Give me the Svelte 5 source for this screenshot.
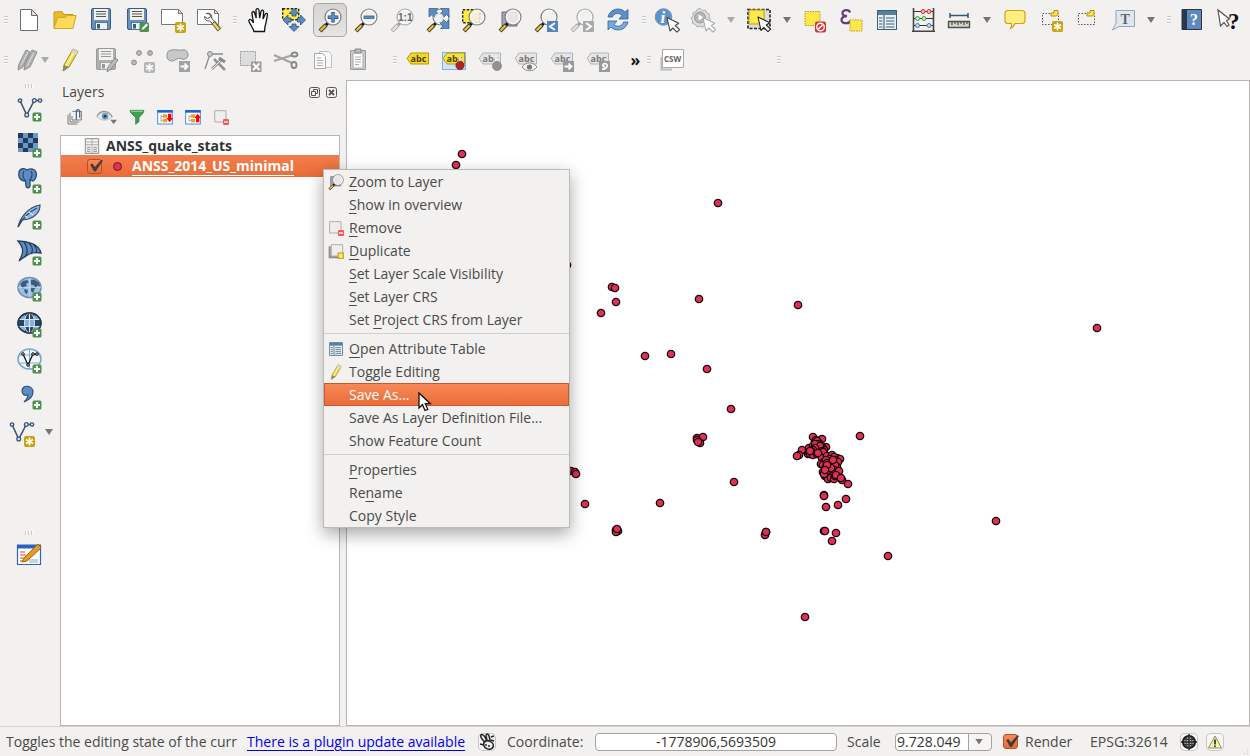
<script>
    const plus = `<rect x="15.500" y="16.500" width="9" height="9" rx="1.500" fill="#4f8f50"/><path d="M20 18v6M17 21h6" stroke="#fff" stroke-width="2"/>`;
    const star = (x, y, color = '#c9a30c') => `<g transform="translate(${x} ${y})"><rect width="11" height="11" rx="2" fill="${color}"/><path d="M5.500 1.500v8M2 3.500l7 4M9 3.500l-7 4" stroke="#fff" stroke-width="1.700"/></g>`;
    const arrow = (x, y, fill = '#fff', stroke = '#222') => `<path transform="translate(${x} ${y})" d="M0 0l3 13.500 2.800-3 4.200 4.200 2.500-2.500-4.200-4.200 3.400-2.200z" fill="${fill}" stroke="${stroke}" stroke-width="1.100" stroke-linejoin="round"/>`;

    function lens(inside, { back = '', gray = false, over = '' } = {}) {
        return `${back}<path d="M2 23l6-6" stroke="${gray ? '#aaa' : '#333'}" stroke-width="4"/>
            <path d="M2.500 22.500l5-5" stroke="${gray ? '#e4e4e4' : '#f4c022'}" stroke-width="2.400"/>
            <path d="M8 17l2-2" stroke="${gray ? '#999' : '#111'}" stroke-width="3"/>
            <circle cx="15" cy="9" r="8" fill="#f1f1ee" fill-opacity=".85" stroke="${gray ? '#aaa' : '#808080'}" stroke-width="1.200"/>
            <circle cx="15" cy="9" r="6.500" fill="none" stroke="#fff" stroke-opacity=".8"/>${inside}${over}`;
    }

    function floppy(a, b, c) {
        return `<rect x="2.500" y=".5" width="19" height="21" rx="1.500" fill="${a}" stroke="${b}"/>
            <rect x="5" y="1" width="14" height="11" fill="#f1f1ee"/><path d="M7 3.500h10M7 6h10M7 8.500h10" stroke="${c}" stroke-width="1.200"/>
            <rect x="6.500" y="14.500" width="12" height="7" fill="#f0f0f0" stroke="${b}" stroke-width=".7"/><rect x="8" y="16" width="3" height="4.500" fill="${b}"/>`;
    }

    function tag(fill, stroke, text, extra = '') {
        return `<path d="M1 10.500l4-5.500h17.500v11H5z" fill="${fill}" stroke="${stroke}"/>
            <text x="4.500" y="13.500" font-family="Open Sans, sans-serif" font-size="9" font-weight="700" fill="${text}">abc</text>${extra}`;
    }

    function nodes(color, extra) {
        return `<path d="M3 4.500L9.700 19 17.300 4.500H23" fill="none" stroke="${color}" stroke-width="1.600"/>
            <g fill="#dce9f5" stroke="${color}" stroke-width="1.300"><circle cx="3" cy="4.500" r="1.700"/><circle cx="9.700" cy="19" r="1.900"/><circle cx="17.300" cy="4.500" r="1.900"/><circle cx="23" cy="4.500" r="1.700"/></g>${extra}`;
    }

    const pencil = (fill, stroke) => `<path d="M5 23l1-6L15 1l5 2.500L11 19z" fill="${fill}" stroke="${stroke}"/><path d="M8 18L17 2.500" stroke="#fff" stroke-opacity=".6" stroke-width="1.500"/><path d="M15 1l5 2.500-2 3.500-5-2.500z" fill="#d9d6cf"/><path d="M5 23l1-6 5 2z" fill="#8b8878"/>`;

    const tablePic = (head, line, bg) => `<rect x="2.500" y="2.500" width="19" height="19" fill="${bg}" stroke="${line}"/><path d="M3 5h18" stroke="${head}" stroke-width="4"/><path d="M9 7v14M4 10h3.500M4 13h3.500M4 16h3.500M4 19h3.500M11 10h8.500M11 13h8.500M11 16h8.500M11 19h8.500" stroke="${line}" stroke-width="1.100"/>`;

    const legend = (d) => `<rect x="1" y="2.500" width="22" height="20" fill="#fff" stroke="#4d8ce8" stroke-width="1.500"/><path d="M.5 3.500h23" stroke="#1f62d6" stroke-width="4"/><path d="M6 9v10M6 11h3M6 17h3" stroke="#888"/><path d="M9 8h6v5H9zM9 15h6v5H9z" fill="#f0a020"/><path d="${d}" fill="red"/>`;

    const layerBox = `<path d="M2.500 2.500h17v17h-17z" fill="#efeeec" stroke="#a5a5a5" stroke-width="1.300"/>`;

    const icons = {
        new: `<path d="M3.500 1.500h11l6 6v15h-17z" fill="#fff" stroke="#6d6d6d"/><path d="M14.500 1.500v6h6z" fill="#ddd" stroke="#6d6d6d"/>`,
        open: `<path d="M1 20V4l8-.5 2 3h9v4" fill="#e9b92c" stroke="#c79a1c"/><path d="M1 20.500L4.500 9.500h8l2-2H23l-3 13z" fill="#ffd95c" stroke="#d3a626"/>`,
        save: floppy('#6491c4', '#3d5b80', '#555'),
        saveAs: floppy('#6491c4', '#3d5b80', '#555') + `<rect x="14.500" y="14.500" width="9.500" height="9.500" rx="1.500" fill="#4f8f50"/><path d="M16.500 22l1-2.500 4-4 1.500 1.500-4 4z" fill="#fff"/>`,
        composer: `<path d="M.5 1.500h17l4 4v11H.5z" fill="#fff" stroke="#777"/><path d="M17.500 1.500v4h4z" fill="#ddd" stroke="#777"/>` + star(14, 14),
        manager: `<path d="M.5 1.500h17l4 4v11H.5z" fill="#fff" stroke="#777"/><path d="M17.500 1.500v4h4z" fill="#ddd" stroke="#777"/><path d="M16 14l6.500 8" stroke="#6b5820" stroke-width="4.400"/><path d="M16.500 15l5.500 6.500" stroke="#f3d568" stroke-width="2.500"/><path d="M9 5.500l4 .5.500 3-3 1.500-3-2c0 3 2 5 5 4.500l3 2.500 2-2-3-3.500c1-3-1-5.500-5.500-4.500z" fill="#f0f0f0" stroke="#555"/>`,
        hand: `<path d="M8 23.500c-1-4-4-7-5-10-.6-2 1.300-3 3-.8l1.500 2.200L6 5.500c-.4-2.300 2-2.800 2.700-.5l1.500 5L10 2.500C10 0 12.700 0 13 2.500l.6 7.500L15 3.500c.4-2.200 2.800-1.700 2.600.4L17 11l2-4.500c.8-1.800 2.800-1.300 2.400.7-.6 3-1.400 8-2.400 11.300l-.5 5z" fill="#fff" stroke="#111" stroke-width="1.300"/>`,
        panSel: `<rect x=".7" y=".7" width="16" height="11" fill="#ffec3d" stroke="#222" stroke-width="1.400" stroke-dasharray="2.500 1.500"/><path d="M12 .5l5 5h-3V8h-4V5.500H7zM12 23.500l5-5h-3V16h-4v2.500H7zM1 12l5-5v3h3v4H6v3zM23.500 12l-5-5v3h-3v4h3v3z" fill="#5b8cc4" stroke="#2d4f7c" stroke-width=".8"/>`,
        zoomIn: lens(`<path d="M15 4v10.500M9.700 9.200h10.600" stroke="#31587e" stroke-width="3.400"/><path d="M15 4.800v9M10.500 9.200h9" stroke="#5f93cb" stroke-width="1.800"/>`),
        zoomOut: lens(`<path d="M9.700 9.200h10.600" stroke="#31587e" stroke-width="3.200"/><path d="M10.500 9.200h9" stroke="#5f93cb" stroke-width="1.700"/>`),
        zoomOne: lens(`<text x="8" y="12.500" font-family="Liberation Sans, sans-serif" font-weight="700" font-size="10" fill="#666">1:1</text>`, { gray: true }),
        zoomFull: lens('', { over: `<path d="M3 .5h9L9.500 3l3.500 3.500L9.500 10 6 6.500 3 9zM23 .5V9l-2.500-2.500L17 10l-3.500-3.500L17 3 14.500.5zM23 20.500h-8.500L17 18l-3.500-3.500L17 11l3.500 3.500L23 12z" fill="#5b8cc4" stroke="#31587e" stroke-width=".7"/><circle cx="13" cy="10" r="4.500" fill="#f4f4f2" fill-opacity=".92"/>` }),
        zoomSel: lens('', { back: `<rect x=".7" y="1.700" width="17" height="13" fill="#ffec3d" stroke="#222" stroke-width="1.400" stroke-dasharray="2.500 1.500"/>` }),
        zoomLayer: lens('', { back: `<path d="M4 4h15v14H4z" fill="#aea0b4" stroke="#746a7c"/>` }),
        zoomLast: lens('', { over: `<rect x="13" y="13" width="11" height="11" fill="#5285bd"/><path d="M21 15l-5 3.500 5 3.500" stroke="#fff" stroke-width="2" fill="none"/>` }),
        zoomNext: lens('', { gray: true, over: `<rect x="13" y="13" width="11" height="11" fill="#aaa"/><path d="M16 15l5 3.500-5 3.500" stroke="#fff" stroke-width="2" fill="none"/>` }),
        refresh: `<path d="M2 9C4 0 15-1 19 4l3-2.500V11h-9l3-3.500C13 4.500 8 5 6.500 9z" fill="#5b8fce" stroke="#2f62a0" stroke-width=".8"/><path d="M22 14c-2 9-13 10-17 5l-3 3V13h9l-3 3.500c3 3 8 2 9.500-2.500z" fill="#79a9e0" stroke="#2f62a0" stroke-width=".8"/>`,
        info: `<circle cx="8.500" cy="9" r="8.300" fill="#5f92c9" stroke="#6f97c2"/><text x="5.500" y="14.500" font-family="Liberation Serif, serif" font-style="italic" font-weight="700" font-size="17" fill="#fff">i</text>` + arrow(12, 9.5, '#fff', '#444'),
        gear: `<path d="M9 .5l2.500 2 3-.5 1 3 3 1-.5 3 1.500 2.500-2.500 2-.5 3-3 .5-2 2.500-2.500-1.500-3 1-1.500-2.500-3-1 .2-3L0 10l2-2.500V4.500l3-.7L6.500 1z" fill="#dedede" stroke="#adadad"/><circle cx="9" cy="9.500" r="5.500" fill="#b5b5b5" stroke="#999"/><path d="M7.500 6.500l5 3-5 3z" fill="#fff"/>` + arrow(12, 9.5, '#fff', '#aaa'),
        select: `<rect x="1" y="1.500" width="22" height="19" fill="#ddd" stroke="#222" stroke-width="1.600" stroke-dasharray="3 1.500"/><path d="M2 2h15v14H2z" fill="#ffe94a" stroke="#b89b20"/>` + arrow(11, 9),
        deselect: `<path d="M2 3.500h15v14H2z" fill="#ffe94a" stroke="#b89b20" stroke-dasharray="1.500 1"/><rect x="12" y="13.500" width="11" height="11" rx="2" fill="#d93030"/><circle cx="17.500" cy="19" r="3.800" fill="none" stroke="#fff" stroke-width="1.400"/><path d="M15 21.500l5-5" stroke="#fff" stroke-width="1.400"/>`,
        expr: `<path d="M11 4.500C10 1 3 1.500 3.500 5.500 3.700 7.500 6 8 8 8c-3 0-5.500 1-5.500 4 0 4.500 9 4 9.500 0" fill="none" stroke="#60407c" stroke-width="2.300"/><path d="M11 12h12v11H11z" fill="#ffe94a" stroke="#b89b20" stroke-dasharray="1.500 1"/>`,
        table: tablePic('#5580a0', '#3c5c70', '#e7f1f8'),
        abacus: `<path d="M2.500 0v23M22.500 0v23M1 23.300h23" stroke="#444" stroke-width="1.600"/><path d="M3 3.500h19M3 10.500h19M3 17.500h19" stroke="#333" stroke-width="1.200"/><g fill="#f6b8b8" stroke="#d12c2c"><circle cx="12" cy="3.500" r="2"/><circle cx="18" cy="3.500" r="2"/></g><g fill="#c4ecc4" stroke="#3d9a4e"><circle cx="6.500" cy="10.500" r="2"/><circle cx="13" cy="10.500" r="2"/></g><g fill="#bfdcf3" stroke="#3f78aa"><circle cx="6.500" cy="17.500" r="2"/><circle cx="18" cy="17.500" r="2"/></g>`,
        ruler: `<path d="M3 7.500h18M3 5v5M21 5v5" stroke="#2e5b74" stroke-width="1.500"/><path d="M1.500 13.500h21v6h-21z" fill="#d2d5c9" stroke="#4d5348" stroke-width="1.400"/><path d="M5 14v3M8 14v2M11 14v3M14 14v2M17 14v3M20 14v2" stroke="#333"/>`,
        tip: `<path d="M5 2.500h14c2 0 3 1.500 3 3v7c0 2-1 3-3 3h-7c-1 3-2 4-4.500 5 1-2 1.500-3 1-5H5c-2 0-3-1-3-3v-7c0-2 1-3 3-3z" fill="#ffee80" stroke="#caa31c" stroke-width="1.200"/>`,
        bookmarkNew: `<path d="M3.500 5.500h16v11h-16z" fill="none" stroke="#555" stroke-dasharray="1.500 1.500"/><path d="M12 5h3V2.500h4v3L17.500 8H12z" fill="#ffe94a" stroke="#b48e10"/>` + star(13, 13),
        bookmark: `<path d="M3.500 5.500h16v11h-16z" fill="none" stroke="#555" stroke-dasharray="1.500 1.500"/><path d="M12 5h3V2.500h4v3L17.500 8H12z" fill="#ffe94a" stroke="#b48e10"/>`,
        annotate: `<path d="M5 2.500h18.500v16H8L1.500 22 5 15z" fill="#dfe8f0" stroke="#98a4ad"/><text x="9.500" y="15.500" font-family="Liberation Serif, serif" font-weight="700" font-size="14" fill="#666">T</text>`,
        help: `<path d="M2 1.500h19.500v20H2z" fill="#5c8abf" stroke="#333"/><path d="M2 1.500h5v20H2z" fill="#28394e"/><text x="10" y="17" font-family="Liberation Serif, serif" font-weight="700" font-size="16" fill="#fff">?</text>`,
        whats: `<path d="M2 2l2.500 16 3.500-3.500 3 4 2-1.500-2.500-4.500 3-1.500z" fill="#fff" stroke="#555" stroke-width="1.200"/><text x="12" y="21" font-family="Liberation Serif, serif" font-weight="700" font-size="23" fill="#111">?</text>`,
        edits: `<path d="M1 22l1-6L9 2l4 2L6 19zM7 22l1-6L15 2l5 2L13 19z" fill="#b2b2b2" stroke="#8e8e8e"/><path d="M4 17l7-13M10 18l7-13" stroke="#ddd"/>`,
        pencil: pencil('#f3df45', '#9a8a23'),
        saveEdits: floppy('#b0b0b0', '#999', '#999') + `<path d="M13 24l1-5 7-9 3 2-7 9z" fill="#bbb" stroke="#888"/>`,
        addPoint: `<g fill="#bbb" stroke="#8a8a8a"><circle cx="9" cy="5" r="2.400"/><circle cx="20" cy="5" r="2.400"/><circle cx="4" cy="14.500" r="2.400"/></g>` + star(14, 14, '#b4b4b4'),
        move: `<path d="M6 2c4-1 6 1 10 0s6 2 6 5-3 5-6 4-4-1-7 1-8 1-8-4 2-5.500 5-6z" fill="#c8c8c8" stroke="#909090"/><rect x="13" y="13" width="11" height="11" fill="#a2a2a2"/><path d="M14.500 18.500h7M18.500 15.500l3 3-3 3" stroke="#fff" stroke-width="1.800" fill="none"/>`,
        nodeTool: `<path d="M3 21L8 6h13" fill="none" stroke="#8a8a8a" stroke-width="1.300"/><circle cx="8" cy="6" r="2.500" fill="#ccc" stroke="#888"/><path d="M10 21l9-9M12 11l11 11" stroke="#929292" stroke-width="2.500"/><path d="M10 21l9-9" stroke="#eee"/><path d="M17 10l6 4" stroke="#888" stroke-width="3"/>`,
        deleteSel: `<path d="M2.500 3.500h15v14h-15z" fill="#ddd" stroke="#999" stroke-dasharray="2 1"/><rect x="13" y="13.500" width="10.500" height="10.500" fill="#9d9d9d"/><path d="M15 15.500l6.500 6.500M21.500 15.500L15 22" stroke="#fff" stroke-width="2"/>`,
        cut: `<path d="M0 7l18 8M0 13l19-6" stroke="#a3a3a3" stroke-width="2.200"/><g fill="none" stroke="#888" stroke-width="1.800"><ellipse cx="20.500" cy="6.500" rx="3" ry="2"/><ellipse cx="20" cy="17" rx="2.500" ry="3"/></g>`,
        copy: `<path d="M9.500 3.500h9l3 3v13h-12z" fill="#f7f7f7" stroke="#c0c0c0"/><path d="M4.500 5.500h8l3 3v12h-11z" fill="#fff" stroke="#aaa"/><path d="M7 10h4M7 12.500h6M7 15h6M7 17.500h6" stroke="#aaa"/>`,
        paste: `<path d="M4.500 2.500h15v19h-15z" fill="#ccc" stroke="#999"/><path d="M7 5h10v15H7z" fill="#fff" stroke="#aaa"/><path d="M9 1h6v4H9z" fill="#bbb" stroke="#888"/><path d="M9 9h6M9 11.500h6M9 14h6M9 16.500h4" stroke="#aaa"/>`,
        label: tag('#f5d827', '#b79608', '#4c3f00'),
        labelPin: `<rect x=".5" y="4.500" width="23" height="17" fill="#cfe4f8" stroke="#7fb2e3"/>` + tag('#f5e33a', '#b79608', '#4c3f00', `<path d="M18 9v6" stroke="#ddd" stroke-width="3"/><circle cx="18" cy="17.500" r="4.200" fill="#b22222" stroke="#801717" stroke-width=".6"/>`),
        labelMove: tag('#e6e6e6', '#b3b3b3', '#777', `<path d="M18 8v6" stroke="#eee" stroke-width="3"/><circle cx="19" cy="18" r="4.500" fill="#929292" stroke="#777" stroke-width=".6"/>`),
        labelEye: tag('#e6e6e6', '#b3b3b3', '#777', `<path d="M8 19c4-5.500 11-5.500 15 0-4 5-11 5-15 0z" fill="#f8f8f8" stroke="#888"/><circle cx="15.500" cy="19" r="2.600" fill="#777"/>`),
        labelArrow: tag('#e6e6e6', '#b3b3b3', '#777', `<rect x="13" y="13" width="11" height="11" fill="#999"/><path d="M14.500 18.500h7M18.500 15.500l3 3-3 3" stroke="#fff" stroke-width="1.800" fill="none"/>`),
        labelTurn: tag('#e6e6e6', '#b3b3b3', '#777', `<rect x="13" y="13" width="11" height="11" fill="#999"/><path d="M16 21c5 1 7-5 3-5.500-3 0-2.500 4 0 3" stroke="#fff" stroke-width="1.700" fill="none"/>`),
        csw: `<path d="M1.500 9v12.500H12" fill="none" stroke="#bbb" stroke-width="2"/><path d="M2.500 1.500h21v18h-21z" fill="#fff" stroke="#aaa"/><text x="4" y="14" font-family="Open Sans, sans-serif" font-size="8" font-weight="700" fill="#666">CSW</text>`,
        vector: nodes('#3a5673', plus),
        raster: `<path d="M1 1h20v19H1z" fill="#6b98cb"/><path d="M1 1h5v5H1zM11 1h5v5h-5zM6 6h5v5H6zM16 6h5v5h-5zM1 11h5v5H1zM11 11h5v5h-5zM6 16h5v4H6z" fill="#243a57"/>` + plus,
        postgis: `<path d="M2 4c1-4 6-4 8-2 4-2 8-1 9 2 1 4 0 7-3 9l-3-1v6c-1 3-4 2-4 0l-.5-5C3 13 1 9 2 4z" fill="#5c8dc2" stroke="#2a4a70" stroke-width="1.300"/><path d="M7 3c-2 3-1 7 1 9M14 3c2 3 1 6-1 9" fill="none" stroke="#2a4a70" stroke-width="1.200"/>` + plus,
        feather: `<path d="M1 23C3 14 11 3 23 1c0 8-6 14-18 15z" fill="#8fb8e2" stroke="#304a6b" stroke-width="1.200"/><path d="M1 23C6 13 12 8 20 4" fill="none" stroke="#304a6b" stroke-width="1.300"/><path d="M8 12l3 2M12 8l4 3" stroke="#fff"/>` + plus,
        spatial: `<path d="M1 1c9 0 21 3 23 12-7-1-11-1-22 8 5-8 5-13-1-20z" fill="#5c8dc2" stroke="#25405f" stroke-width="1.300"/><path d="M7 2c4 5 4 11 1 15M12 3c4 4 4 8 2 11M17 5c3 3 3 6 2 8" fill="none" stroke="#25405f" stroke-width="1.300"/>` + plus,
        wms: `<ellipse cx="12.500" cy="11.500" rx="11.500" ry="10" fill="#9cc1e5" stroke="#7290b2" stroke-width="1.500"/><path d="M3 8l3-3 4-1 2 2-3 2 1 2-3 1-1 2zM14 4l3-.5 5 3 1 4-3-1-1 3-2-3-3-1zM7 13l4 1-1 4-2-1zM14 11l4 1-2 5-2-2z" fill="#3d5b7c"/><path d="M1 11.500h23M12.500 2v19" stroke="#c5dcf2" stroke-width=".7"/>` + plus,
        wcs: `<ellipse cx="12.500" cy="11" rx="11.500" ry="10" fill="#83afde" stroke="#26394f" stroke-width="1.400"/><path d="M2 8h6v7H2zM17 8h6v7h-6zM8 2h9v5H8zM8 15h9v5H8z" fill="#294461"/><path d="M1 7.500h23M1 14.500h23M12.500 1v20" stroke="#d5e5f4" stroke-width="1.200"/><ellipse cx="12.500" cy="11" rx="5" ry="10" fill="none" stroke="#d5e5f4"/><ellipse cx="12.500" cy="11" rx="11.500" ry="10" fill="none" stroke="#26394f" stroke-width="1.400"/>` + plus,
        wfs: `<ellipse cx="12.500" cy="11" rx="11.500" ry="10" fill="#f4f8fb" stroke="#7ba6d3" stroke-width="1.500"/><path d="M2 7h21M2 15h21M12.500 1v20" stroke="#7ba6d3"/><path d="M6 6l5 11 5-11h4" stroke="#111" stroke-width="1.300" fill="none"/><g fill="#ddd" stroke="#111"><circle cx="6" cy="6" r="1.300"/><circle cx="11" cy="17" r="1.300"/><circle cx="16" cy="6" r="1.300"/><circle cx="20" cy="6" r="1.300"/></g>` + plus,
        comma: `<path d="M5 7c0-7 11-6 11 1 0 5-4 8-9 10 3-3 4-5 4-7-4 1-6-1-6-4z" fill="#5c8dc2" stroke="#2a4a70" stroke-width="1.100"/>` + plus,
        newVector: nodes('#3a5673', star(15, 16)),
        form: `<path d="M.5 2.500h23v19H.5z" fill="#fff" stroke="#2e67b8" stroke-width="1.200"/><path d="M0 3.500h24" stroke="#2b63c4" stroke-width="4"/><path d="M3 9h5M3 12h6M3 15h4M3 18h6" stroke="#e34040"/><path d="M12 17h9M12 19h9" stroke="#8aa6cc"/><path d="M7 15l-2 4 5-1L24 5l-3-4z" fill="#e79a23" stroke="#a4660d"/>`,
        addGroup: `<path d="M1.500 8.500v14h14M4.500 5.500v14h14M8 3.500h13.500v13h-14v-6" fill="none" stroke="#666" stroke-width="1.300"/><path d="M14 16V4c0-4 5-4 5 0v9" fill="none" stroke="#3f6182" stroke-width="1.800"/>`,
        eye: `<path d="M0 11c5-8 17-8 23 1-7 6-17 7-23-1z" fill="#eee" stroke="#aaa"/><path d="M0 11c5-10 17-10 23 1" stroke="#999" stroke-width="2" fill="none"/><circle cx="12" cy="11" r="5" fill="#6b9ac9"/><circle cx="12" cy="11" r="2" fill="#234"/><path d="M20 16h10l-5 7z" fill="#777"/>`,
        filter: `<path d="M2 2h20v3l-7 8v6l-5 4V13L2 5z" fill="#3da04f" stroke="#21733a"/><path d="M3 3.500h18" stroke="#83cf8b" stroke-width="2"/>`,
        expand: legend('M16.500 7h5v6.500h2.500L19 20l-5-6.500h2.500z'),
        collapse: legend('M16.500 20h5v-6.500h2.500L19 7l-5 6.500h2.500z'),
        remove: layerBox + `<rect x="15" y="15" width="9" height="9" rx="2" fill="#f05858"/><path d="M16.500 19.500h6" stroke="#fff" stroke-width="2"/>`,
        duplicate: `<path d="M2.500 5v16.500h15" fill="none" stroke="#8d8b88" stroke-width="3"/><path d="M5 2.500h17v17H5z" fill="#efeeec" stroke="#a5a5a5" stroke-width="1.300"/><rect x="15" y="15" width="8" height="8" fill="#f8e867" stroke="#b79a10" stroke-width="1.500"/>`,
        grayTable: `<path d="M2 1h20v22H2z" fill="#f4f4f2" stroke="#808080" stroke-width="1.400"/><path d="M2 6h20M2 10h20M12 1v22" stroke="#a5a5a5" stroke-width="1.300"/><path d="M4.500 14h5M4.500 17h5M4.500 20h5M14 14h5.500M14 17h5.500M14 20h5.500" stroke="#888" stroke-width="1.400"/>`,
        undock: `<rect x=".5" y=".5" width="10" height="10" rx="2" fill="none" stroke="#555"/><path d="M4.500 4V2.500h4v4H7M2.500 4.500h4v4h-4z" fill="none" stroke="#555"/>`,
        close: `<rect x=".5" y=".5" width="10" height="10" rx="2" fill="none" stroke="#555"/><path d="M3 3l5 5M8 3L3 8" stroke="#555" stroke-width="1.800"/>`,
        mouse: `<ellipse cx="5.500" cy="5" rx="1.800" ry="4" transform="rotate(-35 5.500 5)" fill="#eee" stroke="#222" stroke-width="1.500"/><ellipse cx="10" cy="5" rx="1.600" ry="4" transform="rotate(-15 10 5)" fill="#ddd" stroke="#222" stroke-width="1.500"/><ellipse cx="10.500" cy="12" rx="5" ry="4" transform="rotate(25 10.500 12)" fill="#eee" stroke="#222" stroke-width="1.600"/><path d="M8 11v2M11 12v2M2 11l4 1M13 4l3-1M13 7l3 1" stroke="#222" stroke-width="1.400"/>`,
        crs: `<circle cx="9" cy="9" r="6" fill="#b8b8b8" stroke="#1c1c1c" stroke-width="2.200"/><path d="M9 1v16M1 9h16" stroke="#222" stroke-width="1.400"/><ellipse cx="9" cy="9" rx="3" ry="6" fill="none" stroke="#333"/><path d="M4 6.500h10M4 11.500h10" stroke="#333"/>`,
        warning: `<path d="M9 3l6.500 12h-13z" fill="#f5f3a5" stroke="#8a8a66" stroke-linejoin="round"/><path d="M9 6.500v5M9 12.500V14" stroke="#222" stroke-width="1.600"/>`
    };

    // '|' puts a menu arrow after a button ('-' a disabled one), '+' marks the pressed one
    const topBar = [
        ['new', 'open', 'save', 'saveAs', 'composer', 'manager'],
        ['hand', 'panSel', '+zoomIn', 'zoomOut', 'zoomOne', 'zoomFull', 'zoomSel', 'zoomLayer', 'zoomLast', 'zoomNext', 'refresh'],
        ['info', 'gear', '-', 'select', '|', 'deselect', 'expr', 'table', 'abacus', 'ruler', '|', 'tip', 'bookmarkNew', 'bookmark', 'annotate', '|'],
        ['help', 'whats']
    ];
    const editBar = ['pencil', 'saveEdits', 'addPoint', 'move', 'nodeTool', 'deleteSel', 'cut', 'copy', 'paste'];
    const labelBar = ['label', 'labelPin', 'labelMove', 'labelEye', 'labelArrow', 'labelTurn'];
    const sideBar = ['vector', 'raster', 'postgis', 'feather', 'spatial', 'wms', 'wcs', 'wfs', 'comma'];
    const layerBar = ['filter', 'expand', 'collapse', 'remove'];

    const menu = [
        [
            ['_Zoom to Layer', 'zoomLayer'],
            ['_Show in overview'],
            ['_Remove', 'remove'],
            ['_Duplicate', 'duplicate'],
            ['_Set Layer Scale Visibility'],
            ['_Set Layer CRS'],
            ['Set _Project CRS from Layer']
        ],
        [
            ['_Open Attribute Table', 'table'],
            ['Toggle Editing', 'pencil'],
            ['Save As...'],
            ['Save As Layer Definition File...'],
            ['Show Feature Count']
        ],
        [['_Properties'], ['Re_name'], ['Copy Style']]
    ];
    let active = $state('Save As...');
    let render = $state(true);
    let layerOn = $state(true);

    const quakes = [
        [115, 73], [109, 84], [371, 122], [220, 184], [265, 206], [268, 207], [269, 221], [254, 232],
        [352, 218], [451, 224], [750, 247], [298, 275], [324, 273], [360, 288], [384, 328], [513, 355],
        [387, 401], [313, 422], [238, 423], [224, 390], [228, 391], [229, 393], [269, 449], [271, 450], [269, 451], [270, 448],
        [419, 451], [418, 454], [419, 451], [541, 475], [649, 440], [458, 536],
        [350, 357], [356, 356], [350, 359], [353, 362], [351, 361],
        [477, 414], [477, 415], [499, 418], [491, 424], [479, 426], [477, 450], [478, 450], [489, 452], [485, 460],
        [466, 356], [475, 358], [468, 361], [472, 362], [479, 366], [455, 369], [452, 374], [450, 375],
        [469, 359], [470, 360], [471, 363], [469, 364], [476, 367], [477, 369],
        [462, 367], [466, 365], [468, 363], [473, 365], [461, 373], [462, 371], [463, 373], [466, 374], [470, 373], [475, 370], [468, 367], [466, 369], [472, 372], [476, 371], [464, 370],
        [475, 377], [480, 375], [485, 374], [490, 377], [493, 378], [487, 376], [488, 379], [483, 378], [477, 381], [474, 383], [491, 381], [479, 379],
        [476, 384], [480, 384], [485, 383], [490, 386], [488, 384], [478, 388], [483, 390], [487, 389], [492, 390], [476, 391], [478, 395], [480, 396], [482, 394],
        [485, 395], [481, 398], [484, 397], [487, 398], [488, 395], [477, 393], [489, 394], [484, 387], [480, 382],
        [463, 370], [471, 372], [486, 379], [480, 384], [478, 389], [495, 399], [494, 397], [501, 403]
    ];
</script>

{#snippet icon(name, size = 24)}
    <svg class="icon" width={size} height={size} viewBox="0 0 24 24" aria-hidden="true">{@html icons[name]}</svg>
{/snippet}

{#snippet tiny(name, size)}
    <svg class="icon" width={size} height={size} viewBox="0 0 {size} {size}" aria-hidden="true">{@html icons[name]}</svg>
{/snippet}

{#snippet tool(name)}
    {#if name === '|' || name === '-'}
        <button class="more" aria-label="more"><i class="caret" class:pale={name === '-'}></i></button>
    {:else}
        <button class="tool" class:pressed={name[0] === '+'} aria-label={name.replace('+', '')}>
            {@render icon(name.replace('+', ''))}
        </button>
    {/if}
{/snippet}

<div class="window">
    <header>
        <div class="bar">
            {#each topBar as group}
                <div class="group"><i class="grip"></i>{#each group as name}{@render tool(name)}{/each}</div>
            {/each}
        </div>
        <div class="bar">
            <div class="group">
                <i class="grip"></i>
                <button class="tool split" aria-label="edits">{@render icon('edits')}<i class="caret pale"></i></button>
                {#each editBar as name}{@render tool(name)}{/each}
            </div>
            <div class="group labels">
                <i class="grip"></i>
                {#each labelBar as name}{@render tool(name)}{/each}
                <button class="overflow">»</button>
            </div>
            <div class="group"><i class="grip"></i>{@render tool('csw')}</div>
            <div class="group last"><i class="grip"></i></div>
        </div>
    </header>

    <main>
        <nav>
            <i class="grip flat"></i>
            {#each sideBar as name}{@render tool(name)}{/each}
            <div class="pair">{@render tool('newVector')}{@render tool('|')}</div>
            <i class="grip flat lower"></i>
            {@render tool('form')}
        </nav>

        <aside>
            <div class="dock-title">
                <span>Layers</span>
                <button aria-label="undock">{@render tiny('undock', 11)}</button>
                <button aria-label="close">{@render tiny('close', 11)}</button>
            </div>
            <div class="dock-tools">
                <button aria-label="addGroup">{@render icon('addGroup', 16)}</button>
                <button class="visibility" aria-label="eye">{@render icon('eye', 16)}</button>
                {#each layerBar as name}
                    <button aria-label={name}>{@render icon(name, 16)}</button>
                {/each}
            </div>
            <div class="tree">
                <div class="layer stats">{@render icon('grayTable', 16)}<b>ANSS_quake_stats</b></div>
                <label class="layer current">
                    <input type="checkbox" bind:checked={layerOn} />
                    <i class="symbol"></i>
                    <b>ANSS_2014_US_minimal</b>
                </label>
            </div>
        </aside>

        <section class="map">
            <svg width="100%" height="100%" aria-label="map">
                {#each quakes as [x, y]}
                    <circle cx={x} cy={y} r="3.700" fill="#e22f57" stroke="#16060a" stroke-width="1.300" />
                {/each}
            </svg>
        </section>
    </main>

    <footer>
        <span class="hint">Toggles the editing state of the curr</span>
        <a href="#plugins">There is a plugin update available</a>
        <button class="status-icon mouse" aria-label="mouse">{@render tiny('mouse', 18)}</button>
        <label for="coord">Coordinate:</label>
        <input id="coord" type="text" value="-1778906,5693509" />
        <label for="scale">Scale</label>
        <div class="combo">
            <select id="scale"><option>9.728.049</option></select>
            <i class="caret"></i>
        </div>
        <label class="render"><input type="checkbox" bind:checked={render} />Render</label>
        <span class="epsg">EPSG:32614</span>
        <button class="status-icon" aria-label="crs">{@render tiny('crs', 18)}</button>
        <button class="status-icon" aria-label="warning">{@render tiny('warning', 18)}</button>
        <i class="resize"></i>
    </footer>

    <div class="menu" role="menu">
        {#each menu as group, i}
            {#if i > 0}<hr />{/if}
            {#each group as [label, pic]}
                {@const at = label.indexOf('_')}
                <button role="menuitem" class:active={label === active} onmouseenter={() => (active = label)}>
                    <span class="pic">{#if pic}{@render icon(pic, 16)}{/if}</span>
                    <span>{#if at < 0}{label}{:else}{label.slice(0, at)}<u>{label[at + 1]}</u>{label.slice(at + 2)}{/if}</span>
                </button>
            {/each}
        {/each}
    </div>

    <svg class="pointer" width="14" height="20" viewBox="0 0 14 20" aria-hidden="true">
        <path d="M1 1v15l3.500-3.300L7 18.500l2.800-1.200-2.500-5.600h5z" fill="#fff" stroke="#111" stroke-width="1.300" />
    </svg>
</div>

<style>
    :global(body) {
        margin: 0;
        background: #f2f1f0;
    }

    .window {
        position: relative;
        display: flex;
        flex-direction: column;
        height: 100vh;
        overflow: hidden;
        background: #f2f1f0;
        color: #4a4a48;
        font-family: "Open Sans", "Noto Sans", sans-serif;
        font-size: 14px;
        line-height: 20px;
    }

    button {
        all: unset;
        box-sizing: border-box;
        display: flex;
        align-items: center;
        justify-content: center;
        flex: none;
    }

    .icon {
        display: block;
        flex: none;
        overflow: visible;
    }

    .bar {
        display: flex;
        gap: 2px;
        height: 40px;
    }

    .group {
        display: flex;
        align-items: center;
    }

    .grip {
        flex: none;
        width: 4px;
        height: 8px;
        margin: 0 3px 0 4px;
        background: repeating-linear-gradient(#c9c7c5 0 1px, #fbfbfb 1px 2px, #f2f1f0 2px 3px);
    }

    .grip.flat {
        width: 8px;
        height: 4px;
        margin: 4px 0 2px 25px;
        background: repeating-linear-gradient(90deg, #c9c7c5 0 1px, #fbfbfb 1px 2px, #f2f1f0 2px 3px);
    }

    .grip.lower {
        margin-top: 81px;
    }

    .tool {
        width: 36px;
        height: 36px;
    }

    .pressed {
        width: 34px;
        height: 34px;
        margin: 0 1px;
        border: 1px solid #aaa8a5;
        border-radius: 5px;
        background: linear-gradient(#d5d4d2, #e6e5e3);
    }

    .split {
        width: 41px;
        padding-left: 6px;
        justify-content: flex-start;
    }

    .more {
        width: 20px;
        height: 36px;
    }

    .caret {
        flex: none;
        width: 8px;
        height: 6px;
        background: #777573;
        clip-path: polygon(0 0, 100% 0, 50% 100%);
    }

    .caret.pale {
        background: #aaa;
    }

    .labels {
        margin-left: 11px;
    }

    .overflow {
        width: 25px;
        padding-left: 14px;
        color: #111;
        font-size: 16px;
        font-weight: 700;
    }

    .last {
        margin-left: 81px;
    }

    main {
        display: flex;
        flex: 1;
        min-height: 0;
    }

    nav {
        display: flex;
        flex-direction: column;
        align-items: flex-start;
        width: 60px;
        flex: none;
    }

    nav > .tool {
        margin-left: 11px;
    }

    .pair {
        display: flex;
        padding-left: 3px;
    }

    aside {
        display: flex;
        flex-direction: column;
        width: 280px;
        flex: none;
        margin-right: 6px;
    }

    .dock-title {
        display: flex;
        align-items: center;
        gap: 6px;
        height: 24px;
        padding: 0 3px 0 2px;
    }

    .dock-title span {
        flex: 1;
    }

    .dock-tools {
        display: flex;
        align-items: flex-start;
        gap: 12px;
        height: 31px;
        padding: 5px 7px 0;
        box-sizing: border-box;
    }

    .visibility {
        margin: 0 4px 0 2px;
    }

    .tree {
        flex: 1;
        border: 1px solid #b9b6b2;
        background: #fff;
    }

    .layer {
        display: flex;
        align-items: center;
        height: 19px;
        color: #333;
    }

    .stats {
        gap: 6px;
        padding-left: 23px;
    }

    .current {
        height: 22px;
        padding-left: 26px;
        background: linear-gradient(#f27e4c, #e96b39);
        color: #fff;
    }

    .current b {
        text-decoration: underline 1px;
        text-underline-offset: 4px;
    }

    .symbol {
        width: 7px;
        height: 7px;
        margin: 0 10px 0 11px;
        border: 1px solid #6a1b28;
        border-radius: 50%;
        background: #e22f57;
    }

    input[type="checkbox"] {
        appearance: none;
        position: relative;
        width: 15px;
        height: 15px;
        margin: 0;
        box-sizing: border-box;
        border: 1px solid #b5502b;
        border-radius: 3px;
        background: linear-gradient(#f58a5d, #e86a38);
    }

    input[type="checkbox"]:checked::after {
        content: "";
        position: absolute;
        inset: 0 -2px 1px 1px;
        background: #4a3a33;
        clip-path: polygon(8% 42%, 24% 34%, 42% 62%, 88% 2%, 100% 8%, 48% 100%, 36% 100%);
    }

    .map {
        flex: 1;
        border: 1px solid #b9b6b2;
        background: #fff;
    }

    .map svg {
        display: block;
    }

    footer {
        display: flex;
        align-items: center;
        height: 30px;
        padding-left: 6px;
        box-sizing: border-box;
        white-space: nowrap;
        border-top: 1px solid #d5d3d0;
    }

    .hint {
        width: 239px;
        overflow: hidden;
    }

    footer a {
        width: 221px;
        margin-left: 2px;
        color: #0000f0;
        text-underline-offset: 3px;
    }

    .status-icon {
        width: 16px;
        height: 16px;
        margin: 0 9px 0 1px;
        border-radius: 4px;
        background: #f8f8f7;
        box-shadow: 0 0 0 1px #c9c7c4;
    }

    .mouse {
        margin: 0 12px 0 11px;
    }

    .resize {
        width: 10px;
        height: 10px;
        margin-left: auto;
        align-self: flex-end;
        background: radial-gradient(circle, #c9c7c5 0 1px, transparent 1px) 0 0 / 3px 3px;
        clip-path: polygon(100% 0, 100% 100%, 0 100%);
    }

    label[for="coord"] {
        width: 88px;
    }

    #coord {
        width: 242px;
        height: 18px;
        margin-right: 10px;
        padding: 0;
        box-sizing: border-box;
        border: 1px solid #a5a29e;
        border-radius: 4px;
        background: #fff;
        color: #333;
        font: inherit;
        line-height: 16px;
        text-align: center;
    }

    label[for="scale"] {
        width: 48px;
    }

    .combo {
        position: relative;
        width: 97px;
        height: 18px;
        box-sizing: border-box;
        border: 1px solid #a5a29e;
        border-radius: 4px;
        background: linear-gradient(90deg, #fff 72px, #a5a29e 72px 73px, #f6f5f4 73px);
        overflow: hidden;
    }

    select {
        appearance: none;
        width: 100%;
        height: 16px;
        padding: 0 0 0 1px;
        border: 0;
        background: none;
        color: #333;
        font: inherit;
        line-height: 16px;
        vertical-align: top;
    }

    .combo .caret {
        position: absolute;
        right: 8px;
        top: 5px;
        pointer-events: none;
    }

    .render {
        display: flex;
        align-items: center;
        gap: 7px;
        width: 80px;
        margin-left: 11px;
    }

    .epsg {
        width: 90px;
        margin-left: 7px;
    }

    .menu {
        position: absolute;
        left: 323px;
        top: 169px;
        width: 247px;
        box-sizing: border-box;
        border: 1px solid #bdbab6;
        background: #f2f1f0;
        box-shadow: 0 6px 16px rgba(0, 0, 0, 0.35);
    }

    .menu button {
        display: flex;
        justify-content: flex-start;
        width: 100%;
        height: 23px;
        padding-left: 4px;
        white-space: nowrap;
    }

    .menu .active {
        background: linear-gradient(#f98a58, #e96b39);
        box-shadow: inset 0 0 0 1px #c6592f;
        color: #fff;
    }

    .pic {
        width: 21px;
        flex: none;
    }

    u {
        text-underline-offset: 3px;
    }

    hr {
        height: 1px;
        margin: 2px 0 3px;
        border: 0;
        background: #d2d0cd;
    }

    .pointer {
        position: absolute;
        left: 418px;
        top: 392px;
    }
</style>
